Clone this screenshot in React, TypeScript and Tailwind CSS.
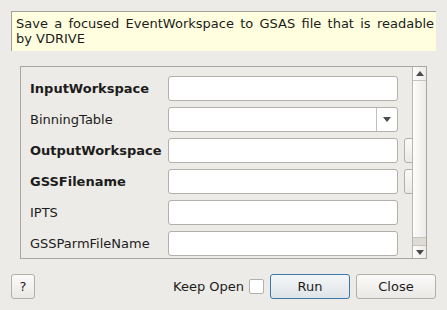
import React from "react";

const font = { fontFamily: '"DejaVu Sans", sans-serif' };

function Row({ label, bold, combo, extra }: { label: string; bold?: boolean; combo?: boolean; extra?: boolean }) {
  return (
    <div className="flex h-[25px] items-center shrink-0">
      <div className={`w-[138px] shrink-0 text-[13px] text-[#1c1c1c] ${bold ? "font-bold" : ""}`}>{label}</div>
      <div className="relative flex h-[25px] w-[230px] shrink-0 rounded-[3px] border border-[#b3afab] bg-white">
        {combo && (
          <div className="ml-auto flex h-full w-[21px] items-center justify-center border-l border-[#c3bfbb]">
            <svg width="8" height="5" viewBox="0 0 8 5"><path d="M0 0 H8 L4 5 Z" fill="#4a4a4a" /></svg>
          </div>
        )}
      </div>
      {extra && <div className="ml-[6px] h-[25px] w-[20px] shrink-0 rounded-[3px] border border-[#b3afab] bg-gradient-to-b from-[#fbfbfa] to-[#ebe9e6]" />}
    </div>
  );
}

export default function App() {
  return (
    <div className="h-[310px] w-[447px] overflow-hidden bg-[#edebe7] pt-[11px]" style={font}>
      <div className="ml-[11px] h-[40px] w-[425px] border-l border-t border-[#a3a09c] bg-[#ffffdf] pl-[4px] pr-[2px] pt-[4px] text-[13px] leading-[15px] text-[#1c1c1c]">
        <div className="text-justify [text-align-last:justify]">Save a focused EventWorkspace to GSAS file that is readable</div>
        <div>by VDRIVE</div>
      </div>
      <div className="ml-[20px] mt-[15px] flex h-[193px] w-[407px] border border-[#aaa6a2]">
        <div className="flex min-w-0 flex-1 flex-col gap-[6px] overflow-hidden pl-[9px] pt-[9px]">
          <Row label="InputWorkspace" bold />
          <Row label="BinningTable" combo />
          <Row label="OutputWorkspace" bold extra />
          <Row label="GSSFilename" bold extra />
          <Row label="IPTS" />
          <Row label="GSSParmFileName" />
        </div>
        <div className="flex w-[14px] shrink-0 flex-col border-l border-[#b9b5b1] bg-[#e4e1dd]">
          <div className="flex h-[14px] shrink-0 items-center justify-center border-b border-[#c8c4c0] bg-gradient-to-r from-[#fdfdfd] to-[#ecebe9]">
            <svg width="8" height="5" viewBox="0 0 8 5"><path d="M0 5 H8 L4 0 Z" fill="#4a4a4a" /></svg>
          </div>
          <div className="h-[157px] shrink-0 border-b border-[#c8c4c0] bg-gradient-to-r from-[#fdfdfd] to-[#ecebe9]" />
          <div className="flex-1 bg-[#dedad6]" />
          <div className="flex h-[13px] shrink-0 items-center justify-center border-t border-[#c8c4c0] bg-gradient-to-r from-[#fdfdfd] to-[#ecebe9]">
            <svg width="8" height="5" viewBox="0 0 8 5"><path d="M0 0 H8 L4 5 Z" fill="#4a4a4a" /></svg>
          </div>
        </div>
      </div>
      <div className="mt-[15px] flex items-center px-[11px]">
        <div className="flex h-[25px] w-[24px] items-center justify-center rounded-[3px] border border-[#b3afab] bg-gradient-to-b from-[#fbfbfa] to-[#eae8e5] text-[13px] text-[#1c1c1c]">?</div>
        <div className="ml-auto text-[13px] text-[#1c1c1c]">Keep Open</div>
        <div className="ml-[5px] h-[15px] w-[15px] rounded-[2px] border border-[#b3afab] bg-white" />
        <div className="ml-[6px] flex h-[25px] w-[80px] items-center justify-center rounded-[3px] border border-[#3a78a8] bg-gradient-to-b from-[#f4f6f8] to-[#dfe4e8] text-[13px] text-[#1c1c1c]">Run</div>
        <div className="ml-[6px] flex h-[25px] w-[80px] items-center justify-center rounded-[3px] border border-[#b3afab] bg-gradient-to-b from-[#fbfbfa] to-[#eae8e5] text-[13px] text-[#1c1c1c]">Close</div>
      </div>
    </div>
  );
}
